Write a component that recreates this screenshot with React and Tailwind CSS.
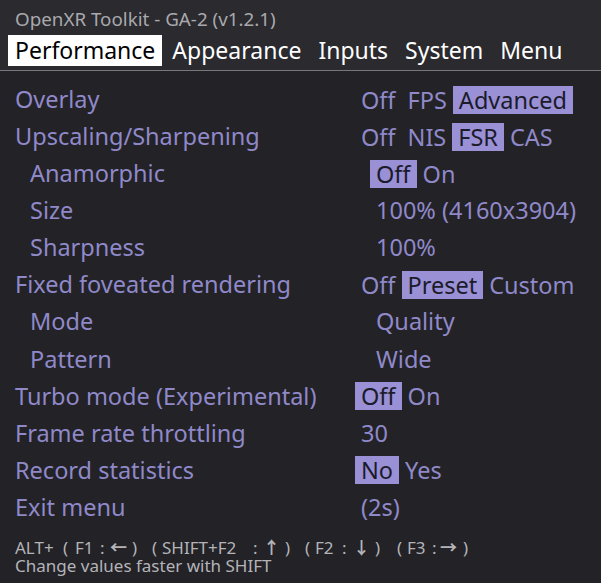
import React from 'react';

const rows = [
  { label: 'Overlay', options: ['Off', 'FPS', 'Advanced'], active: 2 },
  { label: 'Upscaling/Sharpening', options: ['Off', 'NIS', 'FSR', 'CAS'], active: 2 },
  { label: 'Anamorphic', sub: true, options: ['Off', 'On'], active: 0 },
  { label: 'Size', sub: true, value: '100% (4160x3904)' },
  { label: 'Sharpness', sub: true, value: '100%' },
  { label: 'Fixed foveated rendering', options: ['Off', 'Preset', 'Custom'], active: 1 },
  { label: 'Mode', sub: true, value: 'Quality' },
  { label: 'Pattern', sub: true, value: 'Wide' },
  { label: 'Turbo mode (Experimental)', options: ['Off', 'On'], active: 0 },
  { label: 'Frame rate throttling', value: '30' },
  { label: 'Record statistics', options: ['No', 'Yes'], active: 0 },
  { label: 'Exit menu', value: '(2s)' },
];

const tabs = ['Performance', 'Appearance', 'Inputs', 'System', 'Menu'];

const App = () => {
  return (
    <div
      className="w-[601px] h-[583px] bg-[#222227] overflow-hidden"
      style={{ fontFamily: '"Noto Sans", "Noto Sans CJK SC", sans-serif' }}
    >
      {/* header */}
      <div className="bg-[#2a2a2f] border-b border-[#77777c] pb-[4px]">
        <div className="pl-[15px] pt-[6px] h-[35px] text-[18.8px] leading-[26px] text-[#a9a9ad] whitespace-nowrap">
          OpenXR Toolkit - GA-2 (v1.2.1)
        </div>
        <div className="flex items-center pl-[8px] gap-[3px]">
          {tabs.map((t, i) => (
            <div
              key={t}
              className={
                i === 0
                  ? 'bg-white text-black px-[7px] h-[31px] leading-[31px] text-[23px]'
                  : 'text-white px-[7px] h-[31px] leading-[31px] text-[23px]'
              }
            >
              {t}
            </div>
          ))}
        </div>
      </div>

      {/* settings */}
      <div className="pt-[10px]">
        {rows.map((row) => (
          <div
            key={row.label}
            className={`flex items-center h-[37.1px] text-[23.5px] text-[#9089c9] ${row.sub ? 'pl-[30px]' : 'pl-[15px]'}`}
          >
            <div className="w-[346px] shrink-0 whitespace-nowrap">{row.label}</div>
            {row.options ? (
              <div className="flex items-center ml-[-6px] whitespace-nowrap">
                {row.options.map((o, i) => (
                  <span
                    key={o}
                    className={
                      i === row.active
                        ? 'bg-[#9990d6] text-[#1c1b2a] px-[6px] h-[28px] leading-[28px]'
                        : 'px-[6px] h-[28px] leading-[28px]'
                    }
                  >
                    {o}
                  </span>
                ))}
              </div>
            ) : (
              <div className="whitespace-nowrap">{row.value}</div>
            )}
          </div>
        ))}
      </div>

      {/* footer */}
      <div className="pl-[15px] pt-[13px] text-[17px] leading-[18px] text-[#b4b4b8] whitespace-nowrap">
        <div className="flex">
          <span className="w-[48px]">ALT+</span>
          <span className="w-[12px]">(</span>
          <span className="w-[25px]">F1</span>
          <span className="w-[10px]">:</span>
          <span className="w-[22px] font-bold">←</span>
          <span className="w-[20px]">)</span>
          <span className="w-[10px]">(</span>
          <span className="w-[91px]">SHIFT+F2</span>
          <span className="w-[10px]">:</span>
          <span className="w-[22px] font-bold">↑</span>
          <span className="w-[20px]">)</span>
          <span className="w-[10px]">(</span>
          <span className="w-[27px]">F2</span>
          <span className="w-[11px]">:</span>
          <span className="w-[22px] font-bold">↓</span>
          <span className="w-[22px]">)</span>
          <span className="w-[10px]">(</span>
          <span className="w-[25px]">F3</span>
          <span className="w-[8px]">:</span>
          <span className="w-[23px] font-bold">→</span>
          <span>)</span>
        </div>
        <div>Change values faster with SHIFT</div>
      </div>
    </div>
  );
};

export default App;
